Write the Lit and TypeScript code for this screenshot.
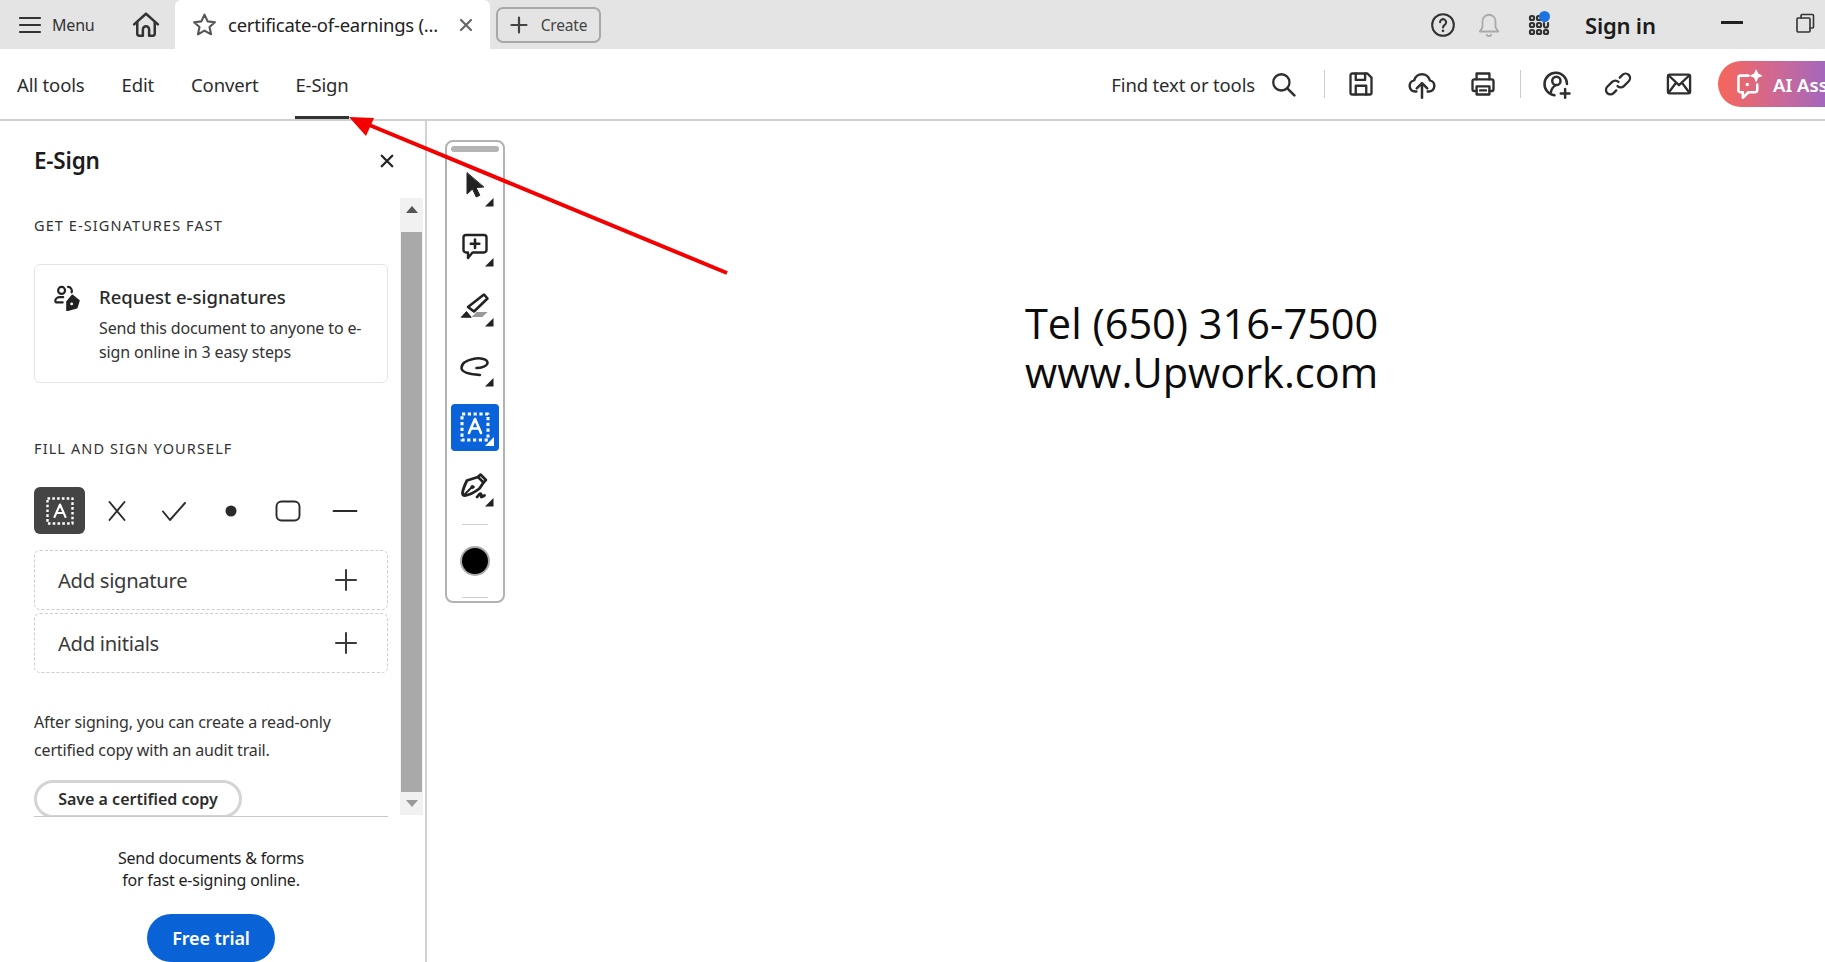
import { LitElement, html, css, svg } from "lit";
import { customElement } from "lit/decorators.js";

const ico = (size: number, body: unknown, box = 24) => html`<svg class="ico" width=${size} height=${size} viewBox="0 0 ${box} ${box}" fill="none" stroke="currentColor" stroke-width="2" stroke-linecap="round" stroke-linejoin="round">${body}</svg>`;

const corner = svg`<polygon points="34,42.500 42.500,42.500 42.500,34" fill="#222" stroke="none"/>`;
const tool = (body: unknown, c: unknown = corner) => html`<svg width="48" height="48" viewBox="0 0 48 48" fill="none" stroke="currentColor" stroke-width="2.4" stroke-linejoin="round" stroke-linecap="round">${body}${c}</svg>`;

@customElement("app-root")
export class AppRoot extends LitElement {
  static styles = css`
    :host { display: block; width: 100%; height: 100vh; overflow: hidden; position: relative; background: #fff; color: #222; font-family: "Noto Sans", "Open Sans", sans-serif; }
    * { box-sizing: border-box; }
    svg { display: block; flex: none; }
    .top { height: 49px; background: #e4e4e4; display: flex; align-items: center; position: relative; }
    .menu { display: flex; align-items: center; margin-left: 18px; width: 105px; gap: 10px; font-size: 16px; color: #333; letter-spacing: -0.2px; }
    .home { width: 48px; display: flex; justify-content: center; color: #333; margin-left: -1px; margin-right: 5px; }
    .tab { width: 315px; height: 49px; background: #fff; border-radius: 6px 6px 0 0; display: flex; align-items: center; padding-left: 17px; font-size: 18.5px; color: #222; letter-spacing: -0.25px; white-space: nowrap; }
    .tab .star { color: #555; margin-right: 11px; }
    .tab .name { width: 230px; overflow: hidden; }
    .tab .x { color: #666; }
    .create { margin-left: 6px; width: 105px; height: 36px; border: 2px solid #a8a8a8; border-radius: 7px; display: flex; align-items: center; justify-content: center; gap: 13px; font-size: 15.5px; color: #444; letter-spacing: -0.2px; }
    .spacer { flex: 1; }
    .right { display: flex; align-items: center; color: #333; }
    .help { margin-right: 20px; }
    .bell { color: #aaa; margin-right: 25px; }
    .apps { position: relative; margin-right: 34px; }
    .dot { position: absolute; width: 11px; height: 11px; border-radius: 50%; background: #1f73e0; top: -2px; right: 1px; }
    .sign { font-size: 22px; font-weight: 600; color: #1c1c1c; width: 136px; letter-spacing: -0.2px; }
    .min { width: 22px; height: 3px; background: #222; margin-right: 52px; margin-bottom: 5px; }
    .restore { margin-right: 10px; margin-bottom: 3px; color: #333; }

    .nav { height: 72px; border-bottom: 2px solid #d0d0d0; display: flex; align-items: center; overflow: hidden; position: relative; }
    .links { display: flex; margin-left: 17px; gap: 37px; height: 100%; font-size: 18.5px; letter-spacing: -0.15px; color: #2c2c2c; }
    .links span { display: flex; align-items: center; height: 70px; }
    .links .on { border-bottom: 3px solid #333; padding-top: 3px; }
    .find { font-size: 18.5px; letter-spacing: -0.15px; color: #2c2c2c; white-space: nowrap; margin-right: 15px; }
    .tools { display: flex; align-items: center; color: #2e2e2e; }
    .sep { width: 1px; height: 28px; background: #ccc; }
    .sep1 { margin-left: 28px; margin-right: 5px; }
    .sep2 { margin-left: 7px; }
    .tb { width: 61px; display: flex; justify-content: center; }
    .tb1 { margin-left: 5px; }
    .ai { width: 130px; height: 46px; margin-left: 9px; margin-right: -23px; border-radius: 23px 0 0 23px; background: linear-gradient(90deg, #f7665a 0%, #c9689a 50%, #8f66cf 100%); color: #fff; display: flex; align-items: center; gap: 8px; padding-left: 16px; font-size: 18.5px; font-weight: 600; white-space: nowrap; overflow: hidden; }

    .body { display: flex; height: 841px; }
    .side { width: 427px; border-right: 2px solid #d2d2d2; display: flex; flex-direction: column; height: 100%; overflow: hidden; }
    .sidehead { height: 77px; padding: 26px 31px 0 34px; display: flex; justify-content: space-between; flex: none; }
    .sidehead h2 { margin: 0; font-size: 22.5px; line-height: 28px; font-weight: 600; color: #1c1c1c; letter-spacing: -0.2px; }
    .sidehead svg { margin-top: 7px; color: #222; }
    .scrollrow { display: flex; height: 618px; flex: none; padding-left: 34px; gap: 12px; }
    .scroll { width: 354px; height: 618px; overflow: hidden; flex: none; }
    .h { font-size: 14.5px; line-height: 20px; letter-spacing: 1.1px; color: #333; margin: 0; }
    .h1 { margin-top: 17px; }
    .card { margin-top: 29px; height: 119px; border: 1px solid #e4e4e4; border-radius: 6px; display: flex; padding: 18px 16px 0 19px; gap: 19px; }
    .card svg { margin-top: 2px; color: #222; }
    .card b { display: block; font-size: 18.5px; font-weight: 500; line-height: 28px; color: #2a2a2a; letter-spacing: 0; }
    .card p { margin: 5px 0 0; font-size: 16px; line-height: 24px; color: #333; letter-spacing: -0.15px; }
    .h2 { margin-top: 55px; }
    .marks { display: grid; grid-template-columns: 51px repeat(5, 57px); margin-top: 29px; height: 47px; align-items: center; justify-items: center; color: #2a2a2a; }
    .marks .sel { width: 51px; height: 47px; border-radius: 6px; background: #444; color: #fff; display: flex; align-items: center; justify-content: center; }
    .marks .m { margin-left: 7px; }
    .add { height: 60px; border: 1px dashed #cdcdcd; border-radius: 6px; display: flex; align-items: center; justify-content: space-between; padding: 0 30px 0 23px; font-size: 20.2px; color: #3a3a3a; letter-spacing: -0.3px; margin-bottom: 3px; }
    .add1 { margin-top: 16px; }
    .after { margin: 35px 0 0; font-size: 16px; line-height: 28px; color: #333; letter-spacing: -0.15px; }
    .cert { margin-top: 16px; width: 208px; height: 38px; border: 3px solid #d4d4d4; border-radius: 19px; display: flex; align-items: center; justify-content: center; font-size: 16px; font-weight: 600; color: #2c2c2c; background: #fff; }
    .bar { width: 23px; height: 617px; background: #f1f1f1; flex: none; display: flex; flex-direction: column; align-items: center; }
    .bar .up, .bar .down { height: 34px; flex: none; display: flex; align-items: flex-start; padding-top: 8px; justify-content: center; }
    .bar .down { height: 23px; margin-top: auto; align-items: center; padding-top: 0; }
    .thumb { width: 21px; height: 560px; background: #a9a9a9; }
    .foot { margin-left: 34px; width: 354px; border-top: 1px solid #c8c8c8; flex: none; text-align: center; padding-top: 30px; font-size: 16px; line-height: 22px; color: #1e1e1e; letter-spacing: -0.2px; }
    .trial { margin: 23px auto 0; width: 128px; height: 48px; border-radius: 24px; background: #0a63d6; color: #fff; display: flex; align-items: center; justify-content: center; font-size: 18px; font-weight: 600; letter-spacing: -0.1px; }

    .doc { flex: 1; position: relative; overflow: hidden; }
    .page { position: absolute; left: 598px; top: 178px; font-family: "Open Sans", sans-serif; font-size: 41.5px; line-height: 49px; color: #0c0c0c; white-space: nowrap; }
    .pal { position: absolute; left: 18px; top: 19px; width: 60px; height: 463px; border: 2px solid #b2b2b2; border-radius: 8px; background: #fff; display: flex; flex-direction: column; align-items: center; color: #222; }
    .grip { width: 48px; height: 6px; border-radius: 3px; background: #b4b4b4; margin-top: 4px; margin-bottom: 6px; flex: none; }
    .t { height: 60px; width: 48px; display: flex; align-items: center; justify-content: center; flex: none; }
    .t.sel { color: #fff; }
    .tile { width: 48px; height: 47px; margin-top: -2px; border-radius: 4px; background: #0a63d8; display: flex; align-items: center; justify-content: center; }
    .div { width: 26px; height: 1px; background: #cfcfcf; flex: none; margin-top: 6px; }
    .circle { width: 26px; height: 26px; border-radius: 50%; background: #000; box-shadow: 0 0 0 2px #aaa; margin: 23px 0; flex: none; }
    .div2 { margin-top: 0; }
    .arrow { position: absolute; left: 0; top: 0; pointer-events: none; }
  `;

  render() {
    const plus = ico(22, svg`<path d="M11 1v20M1 11h20" stroke-width="2"/>`, 22);
    return html`
      <div class="top">
        <div class="menu">
          ${ico(24, svg`<path d="M2 5h20M2 12h20M2 19h20" stroke-width="2.2"/>`)}<span>Menu</span>
        </div>
        <div class="home">${ico(30, svg`<path d="M2.500 11.500 12 3l9.500 8.500"/><path d="M5 9.500V19a1.500 1.500 0 0 0 1.500 1.500H9.500v-5a2.500 2.500 0 0 1 5 0v5h3a1.500 1.500 0 0 0 1.500-1.500V9.500"/>`)}</div>
        <div class="tab">
          <span class="star">${ico(25, svg`<polygon points="12,2.500 15,9 22,9.800 16.800,14.400 18.300,21.400 12,17.800 5.700,21.400 7.200,14.400 2,9.800 9,9"/>`)}</span>
          <span class="name">certificate-of-earnings (...</span>
          <span class="x">${ico(16, svg`<path d="M3 3l10 10M13 3 3 13" stroke-width="2.2"/>`, 16)}</span>
        </div>
        <div class="create">${ico(18, svg`<path d="M9 1.500v15M1.500 9h15" stroke-width="2.2"/>`, 18)}<span>Create</span></div>
        <div class="spacer"></div>
        <div class="right">
          <span class="help">${ico(26, svg`<circle cx="12" cy="12" r="10" stroke-width="1.9"/><path d="M9.300 9.500a2.800 2.800 0 1 1 4.300 2.300c-1 .7-1.600 1.200-1.600 2.400" stroke-width="1.9"/><circle cx="12" cy="17.400" r=".7" fill="currentColor" stroke-width="1"/>`)}</span>
          <span class="bell">${ico(26, svg`<path d="M12 2.500a6 6 0 0 0-6 6V14l-2.500 4h17L18 14V8.500a6 6 0 0 0-6-6Z" stroke-width="1.7"/><path d="M10 21a2.200 2.200 0 0 0 4 0" stroke-width="1.7"/>`)}</span>
          <span class="apps">${ico(24, svg`
            ${[[5, 5], [12, 5], [5, 12], [12, 12], [5, 19], [12, 19], [19, 19]].map(([x, y]) => svg`<rect x=${x - 2} y=${y - 2} width="4" height="4" rx="1.500" stroke-width="2.2"/>`)}
            <path d="M17 10v2.500a2 2 0 0 0 4 0V10" stroke-width="2.200"/>`)}<i class="dot"></i></span>
          <span class="sign">Sign in</span>
          <span class="min"></span>
          <span class="restore">${ico(20, svg`<path d="M6 5V2.500A1 1 0 0 1 7 1.500h10.500a1 1 0 0 1 1 1V14a1 1 0 0 1-1 1H15" stroke-width="1.6"/><rect x="2" y="5" width="13" height="14" rx="1" stroke-width="1.6"/>`, 20)}</span>
        </div>
      </div>

      <div class="nav">
        <div class="links"><span>All tools</span><span>Edit</span><span>Convert</span><span class="on">E-Sign</span></div>
        <div class="spacer"></div>
        <span class="find">Find text or tools</span>
        <div class="tools">
          <span>${ico(26, svg`<circle cx="10.500" cy="10.500" r="7.500" stroke-width="2.1"/><path d="m16 16 6.500 6.500" stroke-width="2.3"/>`)}</span>
          <span class="sep sep1"></span>
          <span class="tb">${ico(28, svg`<path d="M4.500 3h13L21 6.500v13a1.500 1.500 0 0 1-1.500 1.500h-15A1.500 1.500 0 0 1 3 19.500v-15A1.500 1.500 0 0 1 4.500 3Z"/><path d="M7.500 3v5.500h8V3M7.500 21v-7.500h9V21"/>`)}</span>
          <span class="tb">${ico(30, svg`<path d="M7.500 18H6.500a4.500 4.500 0 0 1-.8-8.900 6.500 6.500 0 0 1 12.600 0 4.500 4.500 0 0 1-.8 8.900h-1"/><path d="M12 23V11.500M7.800 15.500 12 11.300l4.200 4.200"/>`)}</span>
          <span class="tb">${ico(28, svg`<path d="M6.500 8V3h11v5"/><path d="M6.500 18H4.500A1.500 1.500 0 0 1 3 16.500v-7A1.500 1.500 0 0 1 4.500 8h15A1.500 1.500 0 0 1 21 9.500v7a1.500 1.500 0 0 1-1.500 1.500h-2"/><path d="M6.500 14h11v7h-11z"/><path d="M9.500 17.500h5"/>`)}</span>
          <span class="sep sep2"></span>
          <span class="tb tb1">${ico(30, svg`<path d="M10 21a9 9 0 1 1 10-9"/><circle cx="11.500" cy="9.500" r="3.300"/><path d="M11 13c-2 1-3.500 3-4 6"/><path d="M18.500 16v7M15 19.500h7"/>`)}</span>
          <span class="tb">${ico(28, svg`<path d="M13.500 6.500 15.800 4.200a3.800 3.800 0 0 1 5.400 5.400L17 13.800a3.800 3.800 0 0 1-5.400 0"/><path d="M10.500 17.500 8.200 19.800a3.800 3.800 0 0 1-5.400-5.400L7 10.200a3.800 3.800 0 0 1 5.400 0"/>`)}</span>
          <span class="tb">${ico(28, svg`<rect x="2.500" y="4" width="19" height="16" rx="1.500"/><path d="m3 4.500 9 8.500 9-8.500M3 19.500l6.500-8.500M21 19.500 14.500 11"/>`)}</span>
          <div class="ai">
            ${ico(31, svg`<path d="M13 6H6a2 2 0 0 0-2 2v11a2 2 0 0 0 2 2h2v5l5-5h6a2 2 0 0 0 2-2v-5" stroke-width="2.300"/><path d="M20 1l1.500 3.500L25 6l-3.500 1.500L20 11l-1.500-3.500L15 6l3.500-1.500Z" fill="#fff" stroke-width="1"/><circle cx="12" cy="14" r="1.500" fill="#fff" stroke="none"/>`, 28)}
            <span>AI Assistant</span>
          </div>
        </div>
      </div>

      <div class="body">
        <aside class="side">
          <div class="sidehead">
            <h2>E-Sign</h2>
            ${ico(14, svg`<path d="M2 2l12 12M14 2 2 14" stroke-width="2.600"/>`, 16)}
          </div>
          <div class="scrollrow">
            <div class="scroll">
              <p class="h h1">GET E-SIGNATURES FAST</p>
              <div class="card">
                ${ico(26, svg`<circle cx="7" cy="5" r="3.200" stroke-width="2"/><path d="M13 1.800a3.600 3.600 0 0 1 3.200 5" stroke-width="2"/><path d="M8.500 11.200H5.500c-2.600 0-4.300 1.600-4.300 3.300 0 1 .7 1.600 1.700 1.600H8" stroke-width="2"/><path d="M17 9.500l6 5-2 6.500-9 2.500v-8Z" fill="currentColor" stroke-width="1.500"/><circle cx="16.300" cy="17.500" r="1.300" fill="#fff" stroke="none"/>`)}
                <div><b>Request e-signatures</b><p>Send this document to anyone to e-sign online in 3 easy steps</p></div>
              </div>
              <p class="h h2">FILL AND SIGN YOURSELF</p>
              <div class="marks">
                <span class="sel">${ico(32, svg`<rect x="3.500" y="3.500" width="25" height="25" stroke-width="2.400" stroke-dasharray="2.600 2.200" stroke-linecap="butt"/><path d="M10.500 22 16 9.500 21.500 22M12.500 18h7" stroke-width="2.100"/>`, 32)}</span>
                <span class="m">${ico(22, svg`<path d="M3.500 2l15 18M18.500 2l-15 18" stroke-width="1.900"/>`, 22)}</span>
                <span class="m">${ico(26, svg`<path d="M2 13.500 9 22 24 5" stroke-width="1.900"/>`, 26)}</span>
                <span class="m">${ico(14, svg`<circle cx="7" cy="7" r="5.500" fill="currentColor" stroke="none"/>`, 14)}</span>
                <span class="m">${ico(26, svg`<rect x="1.500" y="3.500" width="23" height="19" rx="5" stroke-width="1.900"/>`, 26)}</span>
                <span class="m">${ico(26, svg`<path d="M1.500 13h23" stroke-width="1.900"/>`, 26)}</span>
              </div>
              <div class="add add1"><span>Add signature</span>${plus}</div>
              <div class="add"><span>Add initials</span>${plus}</div>
              <p class="after">After signing, you can create a read-only<br>certified copy with an audit trail.</p>
              <div class="cert">Save a certified copy</div>
            </div>
            <div class="bar">
              <span class="up"><svg width="12" height="7" viewBox="0 0 12 7"><polygon points="6,0 12,7 0,7" fill="#555"/></svg></span>
              <span class="thumb"></span>
              <span class="down"><svg width="12" height="7" viewBox="0 0 12 7"><polygon points="0,0 12,0 6,7" fill="#999"/></svg></span>
            </div>
          </div>
          <div class="foot">
            Send documents &amp; forms<br>for fast e-signing online.
            <div class="trial">Free trial</div>
          </div>
        </aside>

        <main class="doc">
          <div class="page">Tel (650) 316-7500<br>www.Upwork.com</div>
          <div class="pal">
            <div class="grip"></div>
            <div class="t">${tool(svg`<path d="M16 9v21l5.500-5 3.800 8 3.500-1.700-3.800-7.800 7.500-.5Z" fill="#222" stroke-width="1"/>`)}</div>
            <div class="t">${tool(svg`<path d="M15 11h18a2.500 2.500 0 0 1 2.500 2.500V26a2.500 2.500 0 0 1-2.500 2.500H21.500L17 34v-5.500h-2a2.500 2.500 0 0 1-2.500-2.500V13.500A2.500 2.500 0 0 1 15 11Z"/><path d="M24 15.500V24M19.800 19.800h8.500" stroke-width="2.600"/>`)}</div>
            <div class="t">${tool(svg`<path d="M33 10.500 36.500 14.500 23 27.500 17 23Z" stroke-width="2.600"/><path d="M10.500 33 15.500 27.500 20 33Z" fill="#222" stroke-width="1"/><path d="M20.500 33 25.700 28H36.700L31.300 33Z" fill="#999" stroke="none"/>`)}</div>
            <div class="t">${tool(svg`<path d="M25.500 24C30 24 37 22 36.500 18.500 36 14.500 28 13.500 22 15 15 16.500 10.500 20 10.500 24 10.500 28 16 30 29 31" stroke-width="2.500"/>`)}</div>
            <div class="t sel"><div class="tile">${tool(svg`<rect x="11" y="11" width="26" height="26" stroke-width="3" stroke-dasharray="3.200 2.600" stroke-linecap="butt"/><path d="M18 30l6-14 6 14M20 25.500h8" stroke-width="2.600"/>`, svg`<polygon points="34,43 43,43 43,34" fill="#fff" stroke="none"/>`)}</div></div>
            <div class="t">${tool(svg`<path d="M29.500 10.500 35 16l-2.500 2.500-5.500-5.500Z" stroke-width="2.500"/><path d="M27 13 16 16.500c-2 4-4 8-4.500 12.500 0 1.500 1 2.500 2.500 2.500C19 31 24 28 28.500 24.500L32.500 18.500" stroke-width="2.800"/><path d="M14 30l7-7" stroke-width="2"/><circle cx="21.500" cy="23" r="1.600" fill="#222" stroke-width="1"/><path d="M26 33c2-2 3-4 4-3s-.5 3 .5 3 2-1 3-1.500" stroke-width="2.800"/>`)}</div>
            <div class="div"></div>
            <div class="circle"></div>
            <div class="div div2"></div>
          </div>
        </main>
      </div>

      <svg class="arrow" width="1825" height="962" viewBox="0 0 1825 962">
        <path d="M727 273 362 122" stroke="#f30000" stroke-width="4" fill="none"/>
        <polygon points="349,117 374,118 366,136" fill="#f30000"/>
      </svg>
    `;
  }
}
